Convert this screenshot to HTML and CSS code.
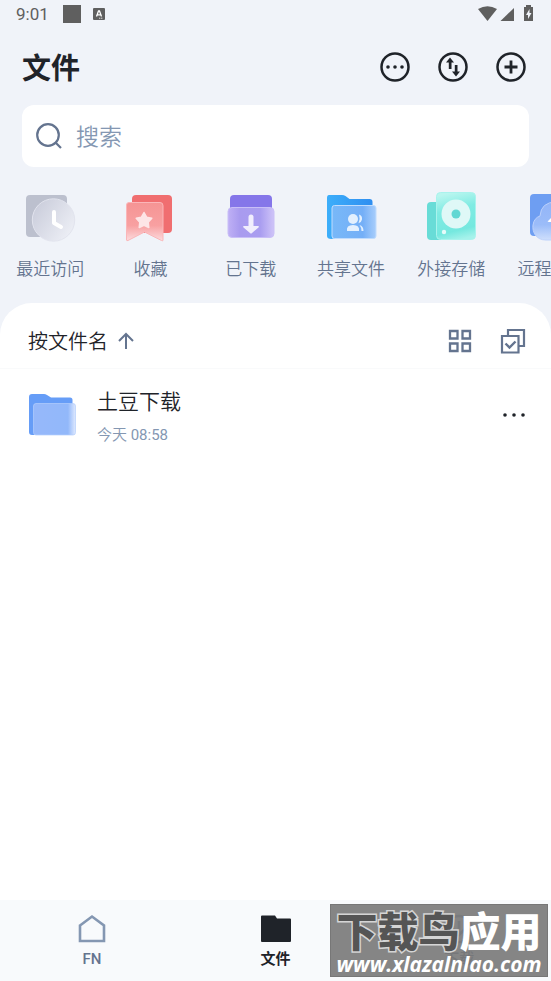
FILE: index.html
```html
<!DOCTYPE html>
<html lang="zh-CN">
<head>
    <meta charset="UTF-8">
    <meta name="viewport" content="width=device-width, initial-scale=1.0">
    <title>文件</title>
    <link rel="stylesheet" href="styles.css">
</head>
<body>
    <div class="status-bar">
        <span class="clock">9:01</span>
        <span class="status-square"></span>
        <svg class="status-app" width="12" height="12" viewBox="0 0 12 12">
            <rect width="12" height="12" rx="1" fill="#5f5f5f"/>
            <path d="M3.5 8.5 5.5 3h1l2 5.5M4.3 6.8h3.4" fill="none" stroke="#fff" stroke-width="1.3"/>
            <path d="M6 10.2h4" stroke="#ddd" stroke-width="1" stroke-dasharray="1.4 .6"/>
        </svg>
        <svg class="status-signals" width="58" height="18" viewBox="0 0 58 18" fill="#5f5f5f">
            <path d="M1 4Q10.500-1.500 20 4L10.500 16Z"/>
            <path d="M37 3v13H23.500Z"/>
            <path d="M47 2h2V0h5v2h2v14h-9Z"/>
            <path d="M52.500 4 49 10h2v4l3.500-6h-2Z" fill="#f0f3f9"/>
        </svg>
    </div>

    <header class="header">
        <h1>文件</h1>
        <div class="actions">
            <button type="button" aria-label="更多">
                <svg width="30" height="30" viewBox="0 0 30 30">
                    <circle cx="15" cy="15" r="13.500" fill="none" stroke="#1f2329" stroke-width="2.500"/>
                    <g fill="#1f2329"><circle cx="8" cy="15" r="1.800"/><circle cx="15" cy="15" r="1.800"/><circle cx="22" cy="15" r="1.800"/></g>
                </svg>
            </button>
            <button type="button" aria-label="传输">
                <svg width="30" height="30" viewBox="0 0 30 30">
                    <circle cx="15" cy="15" r="13.500" fill="none" stroke="#1f2329" stroke-width="2.500"/>
                    <path d="M12 5.500 8 10.500h2.800V17h2.700v-6.500H16ZM18 24.500l-4-5h2.800V13h2.700v6.500H22Z" fill="#1f2329"/>
                </svg>
            </button>
            <button type="button" aria-label="新建">
                <svg width="30" height="30" viewBox="0 0 30 30" fill="none" stroke="#1f2329">
                    <circle cx="15" cy="15" r="13.500" stroke-width="2.500"/>
                    <path d="M15 8.500v13M8.500 15h13" stroke-width="2.800"/>
                </svg>
            </button>
        </div>
    </header>

    <label class="search">
        <svg width="26" height="26" viewBox="0 0 26 26" fill="none" stroke="#64748f" stroke-width="2.200">
            <circle cx="12" cy="12" r="10.800"/>
            <path d="M19.500 19.500 25 25"/>
        </svg>
        <input type="search" placeholder="搜索" aria-label="搜索">
    </label>

    <nav class="shortcuts">
        <a href="#">
            <svg width="52" height="52" viewBox="0 0 52 52">
                <defs>
                    <linearGradient id="clock" x1="0" y1="0" x2="1" y2=".7"><stop stop-color="#c6c9d8"/><stop offset="1" stop-color="#eceef5"/></linearGradient>
                </defs>
                <rect x="2" y="5" width="41" height="42" rx="4" fill="#bcc0ce"/>
                <circle cx="29.500" cy="30" r="21.200" fill="url(#clock)" stroke="#e2e4ee"/>
                <path d="M30 22v11l7 4" fill="none" stroke="#fff" stroke-width="4" stroke-linecap="round" stroke-linejoin="round"/>
            </svg>
            <span>最近访问</span>
        </a>
        <a href="#">
            <svg width="52" height="52" viewBox="0 0 52 52">
                <defs>
                    <linearGradient id="mark" x1="0" y1="0" x2="0" y2="1"><stop stop-color="#f59494"/><stop offset=".6" stop-color="#f8a0a1"/><stop offset="1" stop-color="#fcdcdf"/></linearGradient>
                </defs>
                <rect x="8" y="5" width="40" height="38" rx="4" fill="#f06e70"/>
                <path d="M5 12.500h31q3 0 3 3V50q0 1.500-1.500.500L20.500 42 4 50.500Q2.500 51 2.500 50V15q0-2.500 2.500-2.500Z" fill="url(#mark)" stroke="#fab6b9"/>
                <path d="m20 22.500 2.600 4.700 5.200 1-3.600 4 .6 5.300-4.800-2.200-4.800 2.200.6-5.300-3.600-4 5.200-1Z" fill="#fde5e6" stroke="#fde5e6" stroke-width="1.500" stroke-linejoin="round"/>
            </svg>
            <span>收藏</span>
        </a>
        <a href="#">
            <svg width="52" height="52" viewBox="0 0 52 52">
                <defs>
                    <linearGradient id="down"><stop stop-color="#bfb0f5"/><stop offset=".25" stop-color="#a99bef"/><stop offset=".7" stop-color="#a99df0"/><stop offset="1" stop-color="#cfc4f8"/></linearGradient>
                </defs>
                <rect x="5" y="5" width="42" height="30" rx="4" fill="#8576e9"/>
                <rect x="3" y="17.500" width="46" height="30" rx="4" fill="url(#down)" stroke="#c9bff7"/>
                <path d="M26 27v11" stroke="#f1eefd" stroke-width="5" stroke-linecap="round"/>
                <path d="M19 36h14q1.500 0 .5 1.500L27 43q-1 1-2 0l-6.500-5.500Q17.500 36 19 36Z" fill="#f1eefd"/>
            </svg>
            <span>已下载</span>
        </a>
        <a href="#">
            <svg width="52" height="52" viewBox="0 0 52 52">
                <defs>
                    <linearGradient id="share-back"><stop stop-color="#3caefa"/><stop offset="1" stop-color="#2f8ef0"/></linearGradient>
                    <linearGradient id="share-front"><stop stop-color="#78b8f8"/><stop offset=".7" stop-color="#74aff7"/><stop offset="1" stop-color="#a8cdfb"/></linearGradient>
                </defs>
                <path d="M4 5h13q2 0 3.500 1l4 3h20q3 0 3 3v27l-41 10Q2 49 2 46V8q0-3 2-3Z" fill="url(#share-back)"/>
                <rect x="7" y="15.500" width="44" height="33" rx="2.500" fill="url(#share-front)" stroke="#c0dcfd"/>
                <g fill="#e3f0fe">
                    <circle cx="28" cy="29" r="5"/>
                    <path d="M22 41q-1-6 6-6t6 6ZM34 24.500q3.500 1 3 5-.5 3-3.500 3.700 2-4.200.5-8.700ZM34.500 35q4 1 4 6h-2q0-3.500-2-6Z"/>
                </g>
            </svg>
            <span>共享文件</span>
        </a>
        <a href="#">
            <svg width="52" height="52" viewBox="0 0 52 52">
                <defs>
                    <linearGradient id="disk" x1=".4" y1="0" x2=".6" y2="1"><stop stop-color="#b9f6ef"/><stop offset=".35" stop-color="#80ebe3"/><stop offset=".8" stop-color="#75e8df"/><stop offset="1" stop-color="#a5f2eb"/></linearGradient>
                </defs>
                <rect x="2" y="12" width="24" height="38" rx="4" fill="#68dcd7"/>
                <rect x="11.500" y="2.500" width="39" height="47" rx="4" fill="url(#disk)" stroke="#a9f3ed"/>
                <circle cx="31" cy="24" r="14.500" fill="#dff8f7"/>
                <circle cx="31" cy="24" r="4.500" fill="#62d7d3"/>
                <circle cx="19" cy="42" r="2.200" fill="#e5fbf9"/>
            </svg>
            <span>外接存储</span>
        </a>
        <a href="#">
            <svg width="52" height="52" viewBox="0 0 52 52">
                <defs>
                    <linearGradient id="cloud" x1="0" y1="0" x2="0" y2="1"><stop stop-color="#93b5f8"/><stop offset=".6" stop-color="#9bbcf9"/><stop offset="1" stop-color="#cfdffc"/></linearGradient>
                </defs>
                <rect x="4" y="4" width="42" height="42" rx="4" fill="#6e9ef2"/>
                <path d="M20 50C10 50 6 42 7 35q1-7 7-9 1-14 16-14 12 0 16 12 6 4 6 12 0 14-14 14Z" fill="url(#cloud)" stroke="#bcd1fb"/>
                <path d="m31 22-9 9q-1 1 1 1h5v8h6v-8h5Z" fill="#fff"/>
            </svg>
            <span>远程挂载</span>
        </a>
    </nav>

    <main class="panel">
        <div class="toolbar">
            <button type="button" class="sort">按文件名
                <svg width="16" height="17" viewBox="0 0 16 17" fill="none" stroke="#64748f" stroke-width="2">
                    <path d="M8 17V2M1 9l7-7 7 7"/>
                </svg>
            </button>
            <div class="tools">
                <button type="button" aria-label="网格视图">
                    <svg width="24" height="24" viewBox="0 0 24 24" fill="none" stroke="#64748f" stroke-width="2.300">
                        <path d="M2 2h7.500v7.500H2ZM14.500 2H22v7.500h-7.500ZM2 14.500h7.500V22H2ZM14.500 14.500H22V22h-7.500Z"/>
                    </svg>
                </button>
                <button type="button" aria-label="多选">
                    <svg width="26" height="26" viewBox="0 0 26 26" fill="none" stroke="#64748f" stroke-width="2.200">
                        <path d="M8 7.500V2h16v16h-5.500M2 8h16.500v16.500H2Z"/>
                        <path d="m5.500 15.500 4 4 6-6" stroke-width="2.400"/>
                    </svg>
                </button>
            </div>
        </div>

        <div class="file">
            <svg width="48" height="44" viewBox="0 0 48 44">
                <defs>
                    <linearGradient id="folder"><stop stop-color="#96b8fa"/><stop offset=".82" stop-color="#92b8fa"/><stop offset="1" stop-color="#dfe9fe"/></linearGradient>
                </defs>
                <path d="M3 1h12q1.500 0 3 1l4 2.500h19q2.500 0 2.500 2.500v28L5 42H3q-3 0-3-3V4q0-3 3-3Z" fill="#669df7"/>
                <rect x="4.500" y="10.500" width="42" height="31.500" rx="2.500" fill="url(#folder)" stroke="#b5cefc" stroke-width=".7"/>
            </svg>
            <div class="file-info">
                <div class="file-name">土豆下载</div>
                <div class="file-date">今天 <span>08:58</span></div>
            </div>
            <button type="button" aria-label="文件操作">
                <svg width="26" height="6" viewBox="0 0 26 6" fill="#1f2329">
                    <circle cx="4" cy="3" r="1.800"/><circle cx="13" cy="3" r="1.800"/><circle cx="22" cy="3" r="1.800"/>
                </svg>
            </button>
        </div>
    </main>

    <nav class="tab-bar">
        <a href="#">
            <svg width="30" height="30" viewBox="0 0 30 30" fill="none" stroke="#8497b2" stroke-width="2.600">
                <path d="M3 11.500 15 2.500l12 9V27H3Z"/>
            </svg>
            <span>FN</span>
        </a>
        <a href="#" class="active">
            <svg width="30" height="30" viewBox="0 0 30 30" fill="#1f2329">
                <path d="M1 1.500h13l2 3h13q1 0 1 1V27q0 1-1 1H1q-1 0-1-1V2.500q0-1 1-1Z"/>
            </svg>
            <span>文件</span>
        </a>
        <a href="#">
            <svg width="30" height="30" viewBox="0 0 30 30" fill="none" stroke="#8497b2" stroke-width="2.600">
                <circle cx="15" cy="15" r="13"/>
                <path d="M15 7v14M9 15l6 6 6-6"/>
            </svg>
            <span>下载</span>
        </a>
        <div class="watermark">
            <div class="mark-name"><span>下载鸟</span>应用</div>
            <div class="mark-url">www.xlazalnlao.com</div>
        </div>
    </nav>
</body>
</html>
```

FILE: styles.css
```css
* {
    box-sizing: border-box;
}
body {
    display: flex;
    flex-direction: column;
    min-height: 100vh;
    margin: 0;
    overflow-x: hidden;
    background: #f0f3f9;
    color: #1f2329;
    font-family: Roboto, "Noto Sans CJK SC", sans-serif;
    font-weight: 350;
}
button {
    display: flex;
    align-items: center;
    padding: 0;
    border: none;
    background: none;
    color: inherit;
    font-family: inherit;
    font-weight: inherit;
    cursor: pointer;
}
a {
    color: inherit;
    text-decoration: none;
}
svg {
    display: block;
    flex-shrink: 0;
}
.status-bar {
    display: flex;
    align-items: center;
    height: 28px;
    padding: 0 16px;
    color: #5f5f5f;
}
.clock {
    font-size: 17px;
    font-weight: 400;
}
.status-square {
    width: 18px;
    height: 18px;
    margin-left: 14px;
    background: #5f5f5f;
}
.status-app {
    margin-left: 12px;
}
.status-signals {
    margin-left: auto;
}
.header {
    display: flex;
    align-items: center;
    justify-content: space-between;
    height: 77px;
    padding: 0 25px 0 22px;
}
.header h1 {
    margin: 0;
    padding-top: 4px;
    font-size: 29px;
    font-weight: 700;
    line-height: 44px;
}
.actions {
    display: flex;
    gap: 28px;
}
.search {
    display: flex;
    align-items: center;
    gap: 14px;
    height: 62px;
    margin: 0 22px;
    padding: 0 14px;
    border-radius: 12px;
    background: #fff;
}
.search input {
    flex: 1;
    min-width: 0;
    padding: 3px 0 0;
    border: none;
    outline: none;
    background: none;
    font-family: inherit;
    font-size: 23px;
    font-weight: inherit;
}
.search input::placeholder {
    color: #8497b2;
    opacity: 1;
}
.shortcuts {
    display: flex;
    padding: 23px 0 21px;
    overflow: hidden;
}
.shortcuts a {
    display: flex;
    flex: 0 0 18.2%;
    flex-direction: column;
    align-items: center;
    gap: 15px;
    color: #64748f;
    font-size: 17px;
    line-height: 25px;
    white-space: nowrap;
}
.panel {
    flex: 1;
    border-radius: 32px 32px 0 0;
    background: #fff;
}
.toolbar {
    display: flex;
    align-items: center;
    justify-content: space-between;
    height: 66px;
    padding: 10px 25px 0 28px;
    border-bottom: 1px solid #f9fafb;
}
.sort {
    gap: 10px;
    font-size: 20px;
}
.tools {
    display: flex;
    align-items: center;
    gap: 28px;
}
.file {
    display: flex;
    align-items: center;
    gap: 20px;
    height: 92px;
    padding: 0 24px 0 29px;
}
.file-info {
    flex: 1;
    padding-top: 4px;
}
.file-name {
    font-size: 21px;
    line-height: 36px;
}
.file-date {
    color: #8497b2;
    font-size: 15px;
    line-height: 30px;
}
.file-date span {
    font-weight: 400;
}
.tab-bar {
    position: relative;
    display: flex;
    height: 81px;
    background: #f8fafc;
}
.tab-bar a {
    display: flex;
    flex: 1;
    flex-direction: column;
    align-items: center;
    gap: 5px;
    padding-top: 14px;
    color: #64748f;
    font-size: 15px;
    font-weight: 500;
    line-height: 20px;
}
.tab-bar .active {
    color: #1f2329;
    font-weight: 700;
}
.watermark {
    position: absolute;
    right: 3px;
    bottom: 4px;
    width: 218px;
    height: 73px;
    padding-top: 7px;
    border: 1px solid #777;
    background: rgba(120, 120, 120, 0.9);
    color: #fff;
    text-align: center;
    white-space: nowrap;
}
.mark-name {
    font-size: 41px;
    font-weight: 900;
    line-height: 42px;
}
.mark-name span {
    color: #555;
    -webkit-text-stroke: 3px #d5d5d5;
    paint-order: stroke fill;
}
.mark-url {
    font-family: "Open Sans", sans-serif;
    font-size: 21px;
    font-style: italic;
    font-weight: 700;
    line-height: 20px;
}
```
